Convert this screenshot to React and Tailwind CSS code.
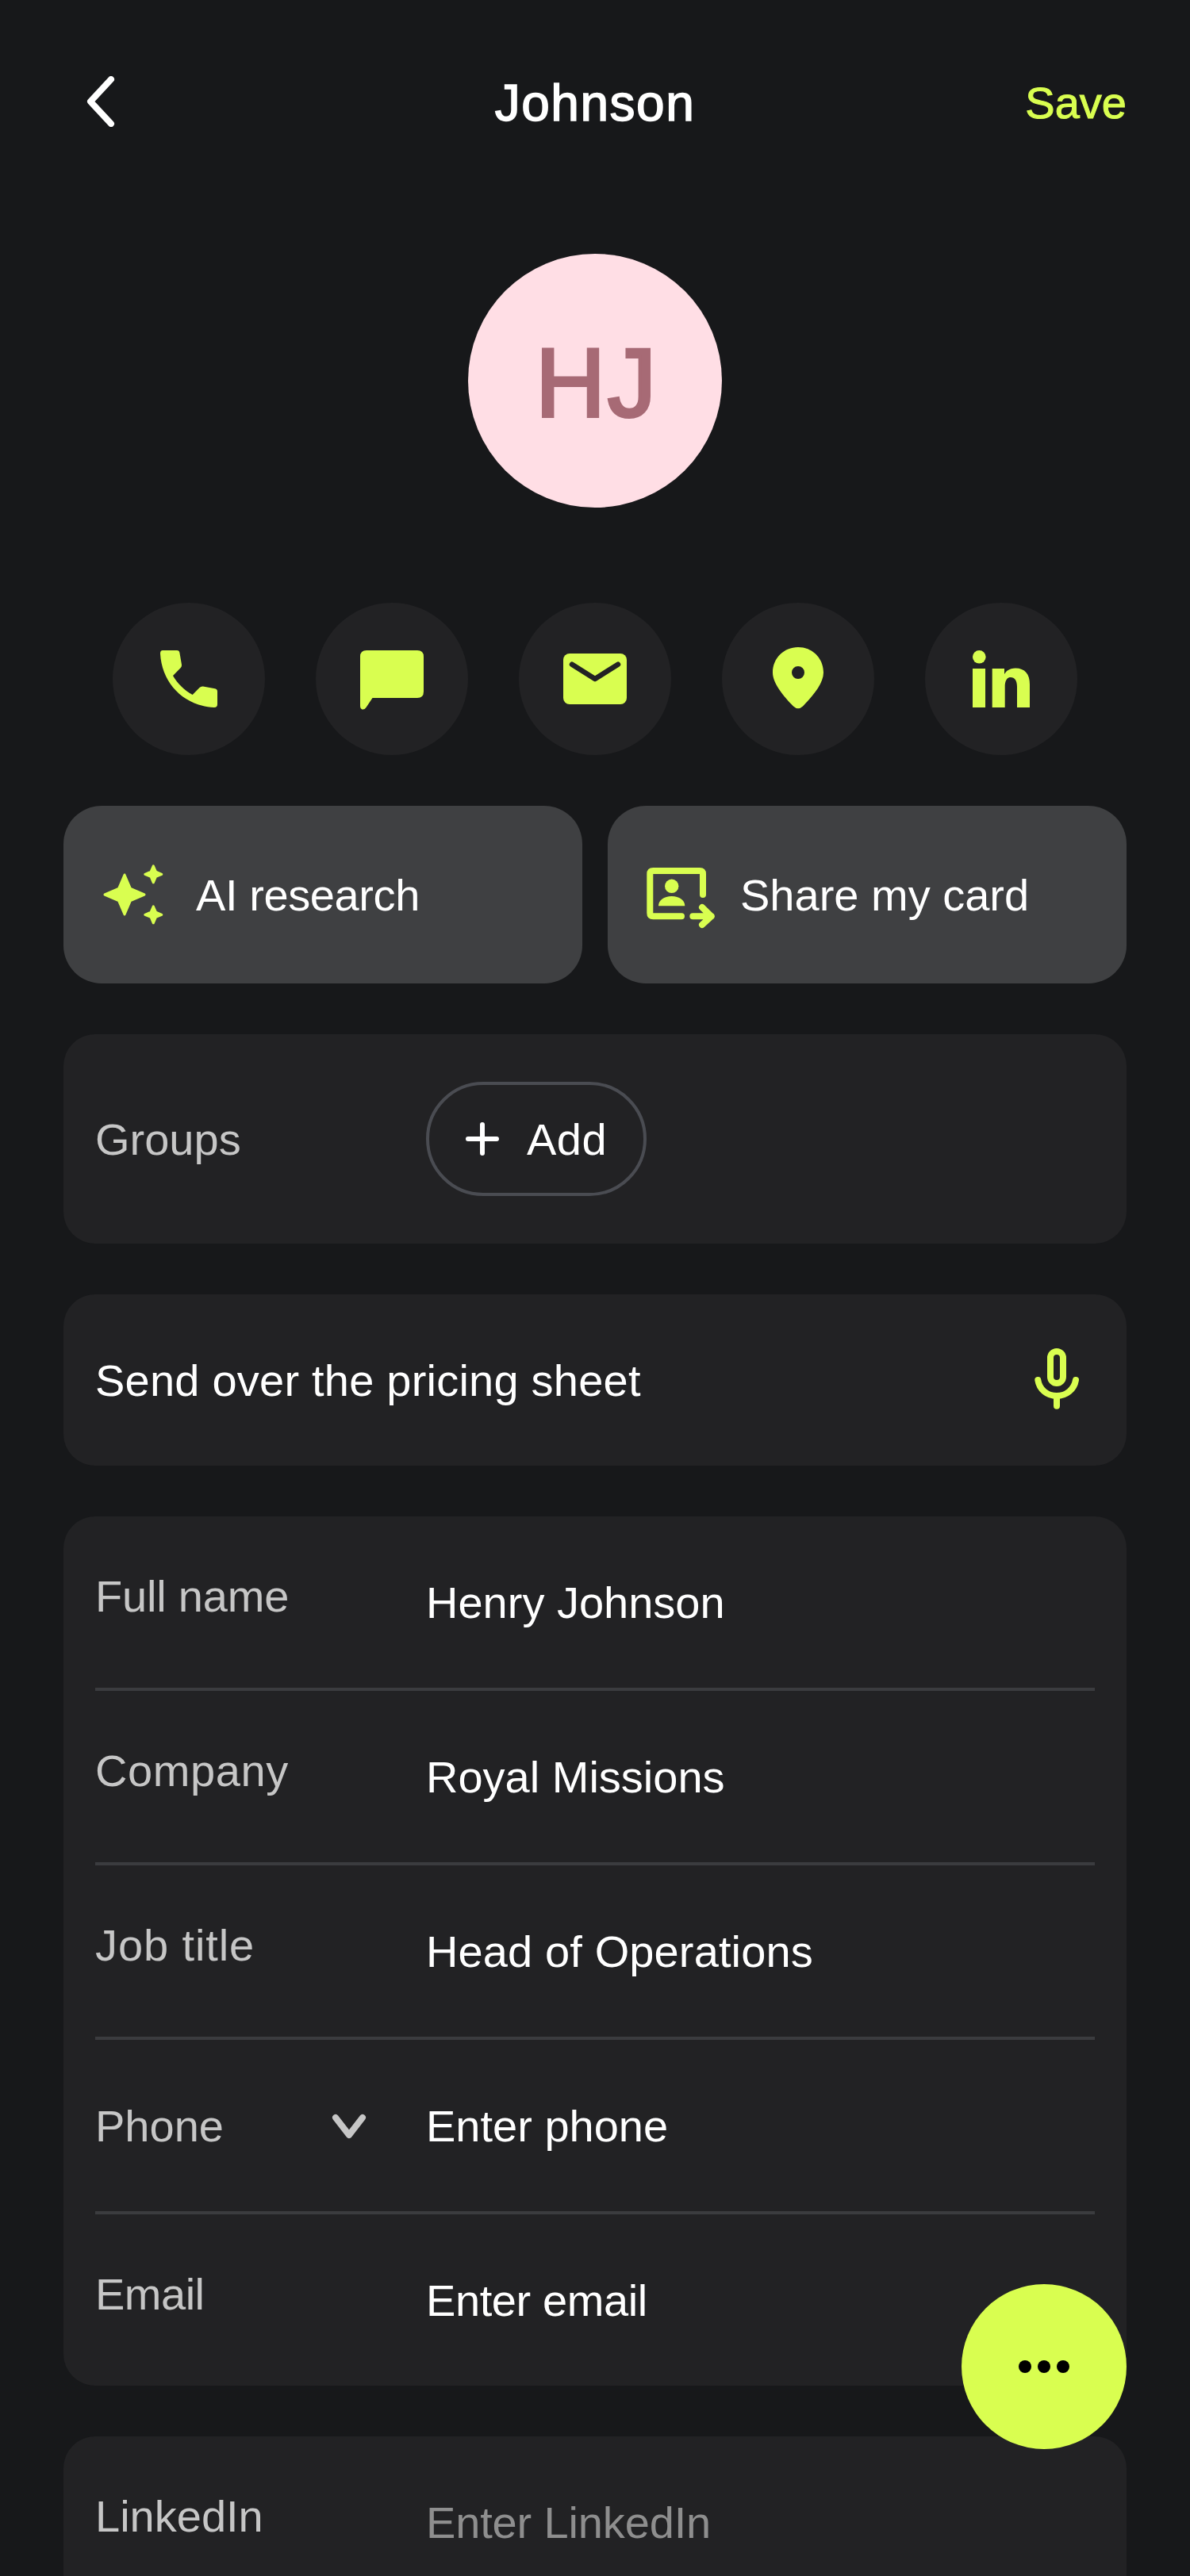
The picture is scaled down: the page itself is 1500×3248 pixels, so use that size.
import React from 'react'

const LIME = '#d9fe50'

const Star = ({ x, y, r }) => {
  const k = r * 0.3
  return (
    <path
      d={`M${x} ${y - r}L${x + k} ${y - k}L${x + r} ${y}L${x + k} ${y + k}L${x} ${y + r}L${x - k} ${y + k}L${x - r} ${y}L${x - k} ${y - k}Z`}
      fill={LIME}
      stroke={LIME}
      strokeWidth="3"
      strokeLinejoin="round"
    />
  )
}

const Icon = ({ children, className = 'w-24 h-24' }) => (
  <svg viewBox="0 0 96 96" className={`${className} shrink-0`} fill="none">
    {children}
  </svg>
)

const PhoneIcon = () => (
  <Icon>
    <path
      transform="translate(12 12)"
      fill={LIME}
      d="M3 0H21Q24 0 24.400 3L27 18Q27.300 20.500 25.500 22.300L16 32C22 42 30 50 40.700 56L49.500 47Q51.500 45 54 45.500L69 48.300Q72 49 72 52V68Q72 72 68 72C30 70 2 42 0 4Q0 0 3 0Z"
    />
  </Icon>
)

const MessageIcon = () => (
  <Icon>
    <path
      transform="translate(8 12)"
      fill={LIME}
      d="M8 0H72Q80 0 80 8V52Q80 60 72 60H15.500L7.500 72Q5.500 75 2.500 74.500Q0 73.500 0 70V8Q0 0 8 0Z"
    />
  </Icon>
)

const MailIcon = () => (
  <Icon>
    <rect x="8" y="16" width="80" height="64" rx="8" fill={LIME} />
    <path d="M19 29.700L48 48L77 29.700" stroke="#222224" strokeWidth="6.500" strokeLinecap="round" strokeLinejoin="round" />
  </Icon>
)

const PinIcon = () => (
  <Icon>
    <path
      transform="translate(16 8)"
      fill={LIME}
      fillRule="evenodd"
      d="M32 0C50 0 64 14 64 32C64 46 50 62 38 74.500Q32 80 26 74.500C14 62 0 46 0 32C0 14 14 0 32 0ZM32 24A8 8 0 1 0 32 40A8 8 0 1 0 32 24Z"
    />
  </Icon>
)

const LinkedinIcon = () => (
  <Icon>
    <g transform="translate(12 12)" fill={LIME}>
      <circle cx="8.300" cy="8.300" r="8.300" />
      <rect x="0" y="23" width="16" height="49" />
      <path d="M24.700 23H40V30C43 25 48 22.500 54 22.500C66 22.500 72 30 72 43V72H56V46C56 38 53 34 48 34C43.500 34 40.700 38 40.700 46V72H24.700Z" />
    </g>
  </Icon>
)

const SparkleIcon = () => (
  <Icon>
    <Star x={37} y={48} r={25} />
    <Star x={73.300} y={22.300} r={10.500} />
    <Star x={73.300} y={73.300} r={10.500} />
  </Icon>
)

const ShareCardIcon = () => (
  <Icon>
    <g stroke={LIME} strokeWidth="8" strokeLinecap="round" strokeLinejoin="round">
      <path d="M80 48V22Q80 18 76 18H17.300Q13.300 18 13.300 22V71.300Q13.300 75.300 17.300 75.300H53" />
      <path d="M67.300 75.300H90.700M79 64L90.700 75.300L79 86" />
    </g>
    <circle cx="40.700" cy="37.300" r="8.700" fill={LIME} />
    <path d="M24 62.300C24 55 31 50 40.700 50C50.300 50 57.300 55 57.300 62.300Z" fill={LIME} />
  </Icon>
)

const MicIcon = () => (
  <Icon>
    <g stroke={LIME} strokeWidth="8" strokeLinecap="round">
      <rect x="40" y="12" width="16" height="40" rx="8" />
      <path d="M24.300 48C26 60 36 68 48 68C60 68 70 60 72 48" />
      <path d="M48 68V80.700" />
    </g>
  </Icon>
)

const ActionCircle = ({ children }) => (
  <div className="w-48 h-48 rounded-full bg-[#222224] flex items-center justify-center">{children}</div>
)

const BigButton = ({ icon, children, className = '' }) => (
  <div className="flex-1 h-56 rounded-[48px] bg-[#3f4042] flex items-center pl-10 gap-[31px]">
    {icon}
    <span className={`pt-[2px] text-[56px] leading-[80px] text-white ${className}`}>{children}</span>
  </div>
)

const FieldRow = ({ label, value, muted, chevron, last, labelClass = '', valueClass = '' }) => (
  <div className={`flex h-[216px] box-content ${last ? '' : 'border-b-4 border-[#3b3c3f]'}`}>
    <div className={`w-[417px] flex items-start justify-between pr-[73px] ${chevron ? 'pt-[69px]' : 'pt-[61px]'}`}>
      <span className={`text-[56px] leading-[80px] text-[#c6c6c6] ${labelClass}`}>{label}</span>
      {chevron && (
        <svg viewBox="0 0 48 32" className="w-12 h-8 mt-[24px]" fill="none">
          <path d="M7 5L24 27L41 5" stroke="#c6c6c6" strokeWidth="8" strokeLinecap="round" strokeLinejoin="round" />
        </svg>
      )}
    </div>
    <div className={`pt-[69px] text-[56px] leading-[80px] ${muted ? 'text-[#8e8e8e]' : 'text-white'} ${valueClass}`}>{value}</div>
  </div>
)

const App = () => (
  <div className="relative w-[1500px] h-[3248px] overflow-hidden bg-[#17181a] font-['Liberation_Sans',sans-serif] px-20">
    {/* Header */}
    <div className="relative h-[90px] mt-[85px] flex items-center justify-center">
      <svg viewBox="0 0 40 64" className="absolute left-[27px] top-[11px] w-10 h-16" fill="none">
        <path d="M33 4L7 32L33 60" stroke="#fff" strokeWidth="8" strokeLinecap="round" strokeLinejoin="round" />
      </svg>
      <span className="text-[64px] leading-[90px] text-white tracking-[1.5px] [-webkit-text-stroke:1.5px_#fff]">Johnson</span>
      <span className="absolute right-0 text-[56px] leading-[80px] text-[#d9fe50] [-webkit-text-stroke:1px_#d9fe50]">Save</span>
    </div>

    {/* Avatar */}
    <div className="mt-[145px] mx-auto w-80 h-80 rounded-full bg-[#ffdee5] flex items-center justify-center">
      <span className="pt-[5px] pl-[5px] text-[122px] leading-none tracking-[3px] text-[#a76a75] [-webkit-text-stroke:4px_#a76a75]">HJ</span>
    </div>

    {/* Quick actions */}
    <div className="mt-[120px] flex justify-center gap-16">
      <ActionCircle><PhoneIcon /></ActionCircle>
      <ActionCircle><MessageIcon /></ActionCircle>
      <ActionCircle><MailIcon /></ActionCircle>
      <ActionCircle><PinIcon /></ActionCircle>
      <ActionCircle><LinkedinIcon /></ActionCircle>
    </div>

    <div className="mt-16 flex gap-8">
      <BigButton icon={<SparkleIcon />} className="tracking-[-0.4px]">AI research</BigButton>
      <BigButton icon={<ShareCardIcon />}>Share my card</BigButton>
    </div>

    {/* Groups */}
    <div className="mt-16 h-[264px] rounded-[40px] bg-[#222224] px-10 flex items-center">
      <span className="w-[417px] pt-[2px] text-[56px] leading-[80px] text-[#c6c6c6]">Groups</span>
      <div className="w-[278px] h-36 rounded-full border-4 border-[#4a4c52] flex items-center pl-[19px] gap-2">
        <svg viewBox="0 0 96 96" className="w-24 h-24" fill="none">
          <path d="M48 30V66M30 48H66" stroke="#fff" strokeWidth="6" strokeLinecap="round" />
        </svg>
        <span className="pt-[2px] text-[56px] leading-[80px] tracking-[0.5px] text-white">Add</span>
      </div>
    </div>

    {/* Note */}
    <div className="mt-16 h-[216px] rounded-[40px] bg-[#222224] px-10 flex items-center justify-between">
      <span className="pt-[2px] text-[56px] leading-[80px] tracking-[0.22px] text-white">Send over the pricing sheet</span>
      <MicIcon />
    </div>

    {/* Fields */}
    <div className="mt-16 rounded-[40px] bg-[#222224] px-10">
      <FieldRow label="Full name" value="Henry Johnson" labelClass="tracking-[-0.2px]" />
      <FieldRow label="Company" value="Royal Missions" labelClass="tracking-[0.6px]" />
      <FieldRow label="Job title" value="Head of Operations" labelClass="tracking-[0.9px]" valueClass="tracking-[0.12px]" />
      <FieldRow label="Phone" value="Enter phone" chevron />
      <FieldRow label="Email" value="Enter email" labelClass="tracking-[-0.5px]" valueClass="tracking-[-0.4px]" last />
    </div>

    <div className="mt-16 rounded-[40px] bg-[#222224] px-10">
      <FieldRow label="LinkedIn" value="Enter LinkedIn" valueClass="tracking-[-0.15px]" muted last />
    </div>

    {/* Floating button */}
    <div className="absolute right-20 top-[2880px] w-52 h-52 rounded-full bg-[#d9fe50] flex items-center justify-center gap-2">
      <span className="w-4 h-4 rounded-full bg-black" />
      <span className="w-4 h-4 rounded-full bg-black" />
      <span className="w-4 h-4 rounded-full bg-black" />
    </div>
  </div>
)

export default App
